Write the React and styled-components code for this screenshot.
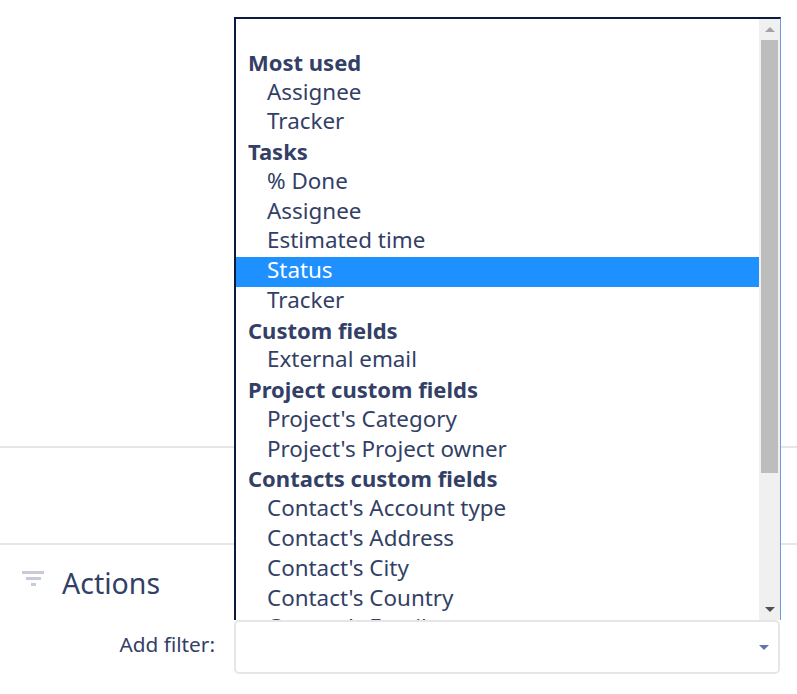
import React from "react";
import styled, { createGlobalStyle } from "styled-components";

const GlobalStyle = createGlobalStyle`
  html, body {
    margin: 0;
    padding: 0;
    background: #fff;
  }
  body {
    font-family: "Noto Sans", "Open Sans", sans-serif;
    color: #333f66;
  }
`;

const Page = styled.div`
  position: relative;
  width: 797px;
  height: 694px;
  overflow: hidden;
  background: #fff;
  display: flex;
  flex-direction: column;
`;

const TopSection = styled.div`
  flex-shrink: 0;
  border-bottom: 2px solid #e6e6e6;
  box-sizing: border-box;
  height: 448px;
`;

const MiddleSection = styled.div`
  height: 97px;
  flex-shrink: 0;
  border-bottom: 2px solid #e6e6e6;
  box-sizing: border-box;
`;

const ActionsHeader = styled.div`
  display: flex;
  align-items: flex-start;
  gap: 16px;
  padding: 19px 0 0 22px;
  height: 38px;
`;

const ActionsIcon = styled.svg`
  width: 24px;
  height: 15px;
  margin-top: 7px;
  flex-shrink: 0;
`;

const ActionsTitle = styled.h3`
  margin: 0;
  font-size: 28.5px;
  font-weight: 400;
  line-height: 38px;
  color: #333f66;
`;

const FilterRow = styled.div`
  display: flex;
  align-items: center;
  margin-top: 18px;
`;

const FilterLabel = styled.label`
  width: 215px;
  margin-bottom: 6px;
  text-align: right;
  font-size: 20.8px;
  color: #333f66;
  flex-shrink: 0;
`;

const FilterSelect = styled.div`
  box-sizing: border-box;
  width: 546px;
  height: 54px;
  margin-left: 19px;
  border: 2px solid #e6e6e6;
  border-radius: 5px;
  background: #fff;
  display: flex;
  align-items: center;
  justify-content: flex-end;
  padding-right: 9px;
`;

const Popup = styled.div`
  position: absolute;
  left: 234px;
  top: 17px;
  width: 547px;
  height: 603px;
  box-sizing: border-box;
  display: flex;
  background: #fff;
  overflow: hidden;
  border-top: 2px solid #0b1a3e;
  border-left: 2px solid #0b1a3e;
  border-right: 1px solid #6f9ae0;
`;

const List = styled.div`
  flex: 1;
  min-width: 0;
  overflow: hidden;
`;

const Row = styled.div`
  height: 29.78px;
  line-height: ${(p) => (p.$group ? "27px" : "26.6px")};
  white-space: nowrap;
  font-size: ${(p) => (p.$group ? "22px" : "22.4px")};
  padding-left: ${(p) => (p.$group ? "12px" : "31px")};
  font-weight: ${(p) => (p.$group ? 700 : 400)};
  background: ${(p) => (p.$selected ? "#1e90ff" : "transparent")};
  color: ${(p) => (p.$selected ? "#fff" : "#333f66")};
`;

const Scrollbar = styled.div`
  width: 21px;
  flex-shrink: 0;
  background: #f0f0f0;
  display: flex;
  flex-direction: column;
  align-items: center;
`;

const ScrollButton = styled.div`
  height: 21px;
  flex-shrink: 0;
  width: 100%;
  display: flex;
  align-items: center;
  justify-content: center;
`;

const Thumb = styled.div`
  width: 17px;
  height: 433px;
  flex-shrink: 0;
  background: #bdbdbd;
`;

const Spacer = styled.div`
  flex: 1;
`;

function Triangle({ up, color, w = 10, h = 5 }) {
  return (
    <svg width={w} height={h} viewBox="0 0 10 5">
      <polygon points={up ? "0,5 10,5 5,0" : "0,0 10,0 5,5"} fill={color} />
    </svg>
  );
}

function FilterIcon() {
  return (
    <ActionsIcon viewBox="0 0 24 15">
      <rect x="0" y="0" width="22" height="3" fill="#c7cbd8" />
      <rect x="4" y="6" width="15" height="3" fill="#c7cbd8" />
      <rect x="9" y="12" width="5" height="3" fill="#c7cbd8" />
    </ActionsIcon>
  );
}

const rows = [
  { label: "\u00a0" },
  { label: "Most used", group: true },
  { label: "Assignee" },
  { label: "Tracker" },
  { label: "Tasks", group: true },
  { label: "% Done" },
  { label: "Assignee" },
  { label: "Estimated time" },
  { label: "Status", selected: true },
  { label: "Tracker" },
  { label: "Custom fields", group: true },
  { label: "External email" },
  { label: "Project custom fields", group: true },
  { label: "Project's Category" },
  { label: "Project's Project owner" },
  { label: "Contacts custom fields", group: true },
  { label: "Contact's Account type" },
  { label: "Contact's Address" },
  { label: "Contact's City" },
  { label: "Contact's Country" },
  { label: "Contact's Email" },
];

export default function App() {
  return (
    <Page>
      <GlobalStyle />
      <TopSection />
      <MiddleSection />
      <ActionsHeader>
        <FilterIcon />
        <ActionsTitle>Actions</ActionsTitle>
      </ActionsHeader>
      <FilterRow>
        <FilterLabel>Add filter:</FilterLabel>
        <FilterSelect>
          <Triangle color="#5f76b0" />
        </FilterSelect>
      </FilterRow>
      <Popup>
        <List>
          {rows.map((r, i) => (
            <Row key={i} $group={r.group} $selected={r.selected}>
              {r.label}
            </Row>
          ))}
        </List>
        <Scrollbar>
          <ScrollButton>
            <Triangle up color="#a3a3a3" />
          </ScrollButton>
          <Thumb />
          <Spacer />
          <ScrollButton>
            <Triangle color="#505050" />
          </ScrollButton>
        </Scrollbar>
      </Popup>
    </Page>
  );
}
